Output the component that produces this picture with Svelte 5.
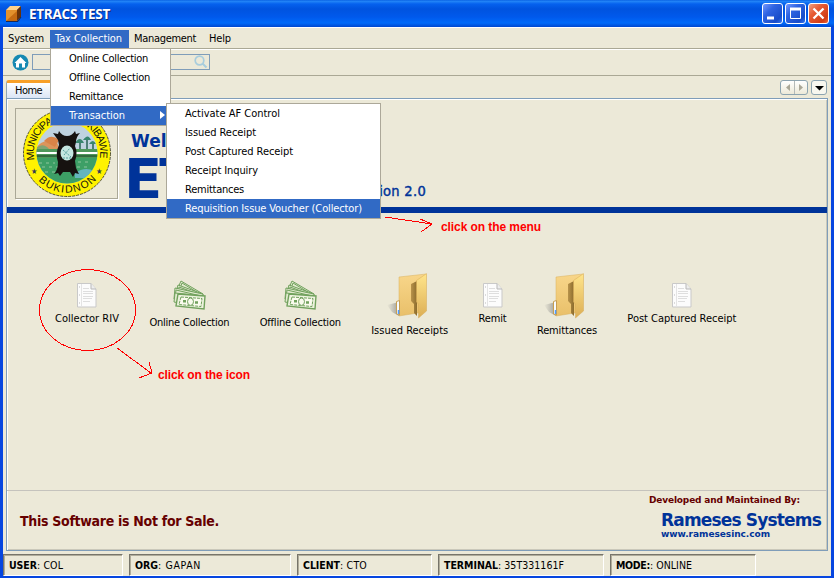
<script>
  const menus = [['System', 36, 5, 6], ['Tax Collection', 67, 5, 7], ['Management', 62, 5, 7], ['Help', 22, 6, 6]];
  const dropdown = [['Online Collection', 79], ['Offline Collection', 81], ['Remittance', 54], ['Transaction', 56]];
  const submenu = [['Activate AF Control', 95], ['Issued Receipt', 71], ['Post Captured Receipt', 108], ['Receipt Inquiry', 73], ['Remittances', 59], ['Requisition Issue Voucher (Collector)', 177]];
  const actions = [
    ['Collector RIV', 64, 'paper'], ['Online Collection', 80, 'money'], ['Offline Collection', 81, 'money'],
    ['Issued Receipts', 77, 'folder'], ['Remit', 28, 'paper'], ['Remittances', 60, 'folder'], ['Post Captured Receipt', 109, 'paper']
  ];
  const status = [
    ['USER', 28, ': COL', 26, 120], ['ORG', 23, ': GAPAN', 43, 162], ['CLIENT', 37, ': CTO', 27, 135],
    ['TERMINAL', 54, ': 35T331161F', 66, 166], ['MODE:', 34, ': ONLINE', 42, 146]
  ];

  // Adjusts tracking so a label occupies the given width.
  function fit(node, width) {
    const natural = node.getBoundingClientRect().width;
    node.style.letterSpacing = (width - natural) / node.textContent.length + 'px';
  }
</script>

{#snippet label(text, width)}<span class="label" use:fit={width}>{text}</span>{/snippet}

{#snippet paper()}
  <svg class="paper" width="20" height="25" viewBox="0 0 20 25">
    <path d="M.5.5H14L19 6V24H.5Z" fill="#fcfcfc" stroke="#c9c9c9" />
    <path d="M14 .5V6H19" fill="#eee" stroke="#b8b8b8" />
    <path d="M4.5 1V23" stroke="#e4e4e4" />
    <path d="M6 5.5H12M6 8.5H16M6 10.5H16M6 13.5H16M6 15.5H15M6 18.5H13" stroke="#dedede" />
    <path d="M2 4H3M2 12H3M2 20H3" stroke="#bbb" />
  </svg>
{/snippet}

{#snippet money()}
  <svg class="money" width="33" height="31" viewBox="0 0 33 31">
    <g stroke="#71a15d" fill="#e2ebcf">
      <path d="M8 1 30 14 24 25 3 12Z" /><path d="M9 3 27 14 23 21 6 11Z" fill="none" />
      <path d="M5 5 30 14 25 27 2 16Z" /><path d="M6 7 28 15 24 23 5 15Z" fill="none" />
      <path d="M2 8 30 14 28 26 1 19Z" /><path d="M3 10 28 16 26 24 2 18Z" fill="none" />
      <path d="M2 13 31 16 30 27 1 22Z" />
      <path d="M5 14 32 16 31 29 3 26Z" fill="#edf2de" stroke-width="1.4" />
      <path d="M8 17 29 18.5 28 26.5 6 24.5Z" fill="#fafbee" stroke-dasharray="3 1" />
      <ellipse cx="17.5" cy="21.7" rx="3" ry="3.7" fill="#f8faec" />
      <path d="M10 21.2h3M22 22.5h3" stroke-width="2.5" />
    </g>
  </svg>
{/snippet}

{#snippet folder()}
  <svg class="folder" width="44" height="46" viewBox="0 0 44 46">
    <defs>
      <linearGradient id="back" x2="0" y2="1"><stop stop-color="#f8d68a" /><stop offset="1" stop-color="#e9c06a" /></linearGradient>
      <linearGradient id="front" x2="0" y2="1"><stop stop-color="#ffe58b" /><stop offset="1" stop-color="#dcae55" /></linearGradient>
      <linearGradient id="dark"><stop stop-color="#b8934b" /><stop offset="1" stop-color="#8c6c2d" /></linearGradient>
      <linearGradient id="shade"><stop stop-color="#888" stop-opacity="0" /><stop offset="1" stop-color="#777" /></linearGradient>
    </defs>
    <path d="M0 32 12 29V43L5 39Z" fill="url(#shade)" opacity=".7" />
    <path d="M12 4 39 1 37 39 12 43Z" fill="url(#back)" stroke="#d9b15e" stroke-width=".5" />
    <path d="M24 11 30 8V43L27 40V31L24 28Z" fill="url(#dark)" />
    <path d="M29.500 7.500 39.500 .6V38L31.500 45V31L29.500 29Z" fill="url(#front)" stroke="#d6ab57" stroke-width=".5" />
    <path d="M9.500 28.500 12.500 27.500V42L9.500 41Z" fill="#f7fbff" stroke="#c79e50" /><path d="M11.500 37V41" stroke="#4f9cff" stroke-width="1.500" />
  </svg>
{/snippet}

<div class="window">
  <header class="titlebar">
    <svg width="17" height="18" viewBox="0 0 17 18">
      <path d="M1 5 5 1H16L12 5Z" fill="#ffd28a" /><path d="M1 5H12V16H1Z" fill="#e2912c" /><path d="M1 16 12 6V16Z" fill="#c56b12" /><path d="M12 5 16 1V12L12 16Z" fill="#693207" />
      <path d="M1 16.500H13L16 12" fill="none" stroke="#192a58" />
    </svg>
    <b>{@render label('ETRACS TEST', 81)}</b>
    <div class="controls">
      <i class="control"><svg width="20" height="20"><path d="M5 15H12" stroke="#fff" stroke-width="3" /></svg></i>
      <i class="control"><svg width="20" height="20"><path d="M5.500 5V15.500H15.500V5" fill="none" stroke="#fff" /><path d="M5 6H16" stroke="#fff" stroke-width="3" /></svg></i>
      <i class="control close"><svg width="20" height="20"><path d="M5.500 5.500 15.500 15.500M15.500 5.500 5.500 15.500" stroke="#fff" stroke-width="2.300" /></svg></i>
    </div>
  </header>

  <div class="client">
    <nav class="menubar">
      {#each menus as [text, width, left, right], i}
        <span class:active={i === 1} style="padding-left:{left}px;padding-right:{right}px">{@render label(text, width)}</span>
      {/each}
    </nav>
    <div class="toolbar">
      <svg width="17" height="17" viewBox="0 0 17 17"><circle cx="8.500" cy="8.500" r="8" fill="#1689b2" /><path d="M2.500 9 8.500 3 14.500 9H13V13.500H10V9.500H7V13.500H4V9Z" fill="#fff" /></svg>
      <div class="search"><svg width="14" height="14" viewBox="0 0 14 14"><circle cx="5.500" cy="5.500" r="4.300" fill="none" stroke="#a8cddd" stroke-width="1.700" /><path d="M8.500 8.500 12.500 12.500" stroke="#a8cddd" stroke-width="2" /></svg></div>
    </div>
    <div class="tabs">
      <div class="tab">{@render label('Home', 27)}</div>
      <div class="pager"><svg width="26" height="13"><path d="M9 3V10L5 6.500ZM18 3V10L22 6.500Z" fill="#aaa797" /><path d="M13.500 0V13" stroke="#b4b9b8" /></svg></div>
      <div class="pager more"><svg width="14" height="13"><path d="M3 5H12L7.500 9.500Z" fill="#000" /></svg></div>
    </div>

    <main>
      <section class="banner">
        <div class="seal">
          <svg width="88" height="88" viewBox="-44 -44 88 88">
            <defs>
              <path id="upper-arc" d="M-32.500 7A33.200 33.200 0 1 1 32.500 7" />
              <path id="lower-arc" d="M-33 22A39.700 39.700 0 0 0 33 22" />
              <clipPath id="scene"><circle r="30.500" /></clipPath>
            </defs>
            <circle r="43.500" fill="#fff200" stroke="#282820" stroke-width=".8" stroke-dasharray="3 1" />
            <g clip-path="url(#scene)">
              <rect x="-31" y="-31" width="62" height="62" fill="#bfd2df" />
              <path d="M-31-4Q-27-12-19-12-9-15-8-4V0H-31Z" fill="#dc955b" />
              <path d="M-23-12Q-16-20-8-13L-12-6Z" fill="#d98448" />
              <path d="M-31-5Q-24-11-18-4H-10V-1H-31Z" fill="#80a474" />
              <path d="M13-3V-10M20-3V-13M26-3V-9" stroke="#4c7e76" stroke-width="2" />
              <path d="M8-10q5-8 9 0M16-13q5-7 8 0M22-9q4-6 7 0" fill="#38866e" />
              <path d="M-31-4H31V5H-31Z" fill="#4e985b" /><path d="M-31 0H31" stroke="#fff" stroke-width="2" /><path d="M-31 3H31" stroke="#163f27" />
              <path d="M-31 5H31V31H-31Z" fill="#3d9f66" />
              <path d="M-28 10H-12M-25 14H-9M-22 19H-7M11 9H25M10 14H23" stroke="#74b98a" stroke-width="1.500" stroke-dasharray="3 4" />
              <path d="M8 20Q18 13 27 18V25H8Z" fill="#65b5bd" />
            </g>
            <path d="M-14-20-9-19-8-22Q-5-17 0-17 5-17 8-22L9-19 13-20Q9-16 9-11L8-7Q11 0 8 8L9 15 12 21 8 20 6 24 3 19H-4L-7 23-9 20-13 21Q-9 17-9 9-12 0-8-8L-9-13Z" fill="#161210" />
            <ellipse cy="0" rx="6.500" ry="7.500" fill="#c4e6e0" /><path d="M-4-3 4 4M-3 2 3-5M-4 5 4 5" stroke="#58a29f" stroke-dasharray="2 1" />
            <g fill="#15140e" font-family="Liberation Sans, sans-serif" font-size="10.500">
              <text><textPath href="#upper-arc" textLength="116">MUNICIPALITY OF KIBAWE</textPath></text>
              <text><textPath href="#lower-arc" startOffset="7" textLength="65">BUKIDNON</textPath></text>
            </g>
            <text x="-36" y="21" font-size="8" fill="#333a55">★</text><text x="29" y="21" font-size="8" fill="#333a55">★</text>
          </svg>
        </div>
        <div class="product">
          <div class="welcome">Welcome to</div>
          <div class="name">ETRACS</div>
        </div>
        <div class="version">{@render label('Version 2.0', 76)}</div>
      </section>
      <section class="desktop">
        {#each actions as [text, width, icon]}
          <div class="shortcut {icon}-item" style="width:{width}px">
            {#if icon === 'paper'}{@render paper()}{:else if icon === 'money'}{@render money()}{:else}{@render folder()}{/if}
            {@render label(text, width)}
          </div>
        {/each}
      </section>
      <footer>
        <div class="notice">{@render label('This Software is Not for Sale.', 199)}</div>
        <div class="vendor">
          <div class="developed">{@render label('Developed and Maintained By:', 151)}</div>
          <div class="company">{@render label('Rameses Systems', 160)}</div>
          <div class="site">{@render label('www.ramesesinc.com', 109)}</div>
        </div>
      </footer>
    </main>
    <div class="statusbar">
      {#each status as [key, keyWidth, value, valueWidth, width]}
        <div class="cell" style="width:{width}px"><b>{@render label(key, keyWidth)}</b>{@render label(value, valueWidth)}</div>
      {/each}
    </div>
  </div>

  <div class="popup dropdown">
    {#each dropdown as [text, width], i}
      <div class="entry" class:selected={i === 3}>{@render label(text, width)}{#if i === 3}<svg width="6" height="9"><path d="M0 0V8L5 4Z" fill="#fff" /></svg>{/if}</div>
    {/each}
  </div>
  <div class="popup submenu">
    {#each submenu as [text, width], i}
      <div class="entry" class:selected={i === 5}>{@render label(text, width)}</div>
    {/each}
  </div>

  <svg class="marks" width="834" height="578" fill="none" stroke="#f00" shape-rendering="crispEdges">
    <ellipse cx="87.500" cy="310" rx="48" ry="40.500" />
    <path d="M117 348 151 373M149 362 152 373 139 378M385 217 432 224M420 219 432 224 421 232" />
  </svg>
  <div class="callout menu-callout">{@render label('click on the menu', 100)}</div>
  <div class="callout icon-callout">{@render label('click on the icon', 92)}</div>
</div>

<style>
  .window { position: relative; box-sizing: border-box; width: 834px; height: 578px; padding: 0 3px 2px; overflow: hidden; background: #0646e0; font: 11px "DejaVu Sans Condensed", "DejaVu Sans", sans-serif; font-stretch: condensed; color: #000; }
  .label { display: inline-block; white-space: pre; }
  svg { display: block; flex: none; }
  .titlebar { display: flex; align-items: center; height: 27px; margin: 0 -3px; padding: 0 5px; box-sizing: border-box; background: linear-gradient(#0055dd 0, #2588f8 1px, #0561ee 4px, #0053df 9px, #0059ec 17px, #006af9 23px, #0047cf 27px); }
  .titlebar b { margin-left: 7px; font: bold 13.500px "Open Sans", sans-serif; font-stretch: normal; color: #fff; text-shadow: 1px 1px #0c2b82; }
  .controls { display: flex; gap: 2px; margin-left: auto; }
  .control { box-sizing: border-box; width: 21px; height: 21px; border: 1px solid #fff; border-radius: 3px; background: linear-gradient(135deg, #7598ff, #2f64e2 35%, #174cc9 80%, #3779f3); }
  .control svg { margin: -1px; }
  .close { background: linear-gradient(135deg, #f0a080, #e75c35 35%, #d13c15 80%, #f16837); }
  .client { height: 549px; background: #ece9d8; display: flex; flex-direction: column; }
  .menubar { box-sizing: border-box; height: 22px; padding-top: 2px; border-top: 1px solid #fff; border-bottom: 1px solid #aaa895; display: flex; }
  .menubar > span { display: block; line-height: 18px; height: 19px; }
  .active { background: #316ac5; color: #fff; }
  .toolbar { box-sizing: border-box; height: 27px; border-top: 1px solid #fff; border-bottom: 1px solid #aaa895; display: flex; align-items: center; padding: 0 9px 1px; gap: 3px; }
  .search { box-sizing: border-box; width: 178px; height: 16px; border: 1px solid #7f9db9; display: flex; justify-content: flex-end; align-items: center; padding-right: 1px; }
  .tabs { display: flex; height: 22px; align-items: flex-start; padding: 4px 4px 0 3px; box-sizing: border-box; gap: 3px; }
  .tab { box-sizing: border-box; height: 18px; width: 54px; padding-left: 8px; line-height: 15px; border: 1px solid #91a7b4; border-width: 0 1px; border-top: 3px solid #f8a028; border-radius: 3px 3px 0 0; background: linear-gradient(#fff, #dbe5f5); }
  .pager { box-sizing: border-box; width: 28px; height: 15px; border: 1px solid #8da4b0; border-radius: 3px; background: linear-gradient(#fff, #ece9d8); margin-left: auto; }
  .more { width: 16px; margin-left: 0; background: #f8f7ef; }
  main { box-sizing: border-box; height: 453px; margin: 0 3px; border: 1px solid #7f9db9; display: flex; flex-direction: column; box-shadow: inset 1px 1px #fff, inset -1px -1px #cac8ba; }
  .banner { box-sizing: border-box; height: 114px; border-bottom: 6px solid #039; padding: 9px 8px 0; display: flex; color: #039; }
  .seal { box-sizing: border-box; width: 103px; height: 91px; border: 1px solid #aaa897; padding: 0 7px; box-shadow: 1px 1px #fff; }
  .product { width: 243px; padding: 21px 0 0 13px; box-sizing: border-box; font-family: "DejaVu Sans", sans-serif; font-stretch: normal; font-weight: bold; }
  .welcome { font-size: 17px; line-height: 25px; }
  .name { margin-left: -7px; font-size: 56px; line-height: 50px; letter-spacing: -3px; }
  .version { width: 65px; display: flex; justify-content: flex-end; padding-top: 75px; font: 14.500px "DejaVu Sans Condensed", sans-serif; font-stretch: condensed; -webkit-text-stroke: .4px #039; white-space: nowrap; }
  .desktop { height: 277px; box-sizing: border-box; padding: 59px 0 0 48px; display: flex; gap: 30.400px; }
  .shortcut { flex: none; display: flex; flex-direction: column; align-items: center; line-height: 14px; }
  .paper-item { padding-top: 11px; gap: 4px; }
  .money-item { padding-top: 8px; gap: 5px; }
  .folder-item { padding-top: 1px; gap: 5px; }
  .folder { margin-left: -1px; }
  footer { height: 60px; box-sizing: border-box; border-top: 1px solid #c5c3bd; display: flex; justify-content: space-between; padding: 0 6px 0 13px; font-weight: bold; }
  .notice { padding-top: 21px; font-size: 14px; line-height: 18px; color: #600; }
  .vendor { width: 172px; color: #039; font-family: "DejaVu Sans", sans-serif; font-stretch: normal; }
  .developed { font-size: 9px; line-height: 12px; padding-top: 3px; color: #600; }
  .company { font-size: 17px; line-height: 20px; padding: 4px 0 0 12px; }
  .site { font-size: 9px; line-height: 10px; padding-left: 12px; margin-top: -1px; }
  .statusbar { display: flex; gap: 6px; margin-top: 3px; height: 22px; }
  .cell { box-sizing: border-box; height: 22px; border: 1px solid; border-color: #77756b #fff #fff #77756b; box-shadow: inset 1px 1px #b1ad9b; display: flex; padding-left: 5px; line-height: 20px; font-size: 10.500px; }
  .popup { position: absolute; box-sizing: border-box; background: #fff; border: 1px solid #aca899; }
  .dropdown { left: 50px; top: 48px; width: 121px; height: 78px; }
  .submenu { left: 166px; top: 103px; width: 215px; height: 116px; }
  .entry { height: 19px; line-height: 18px; padding: 0 4px 0 18px; display: flex; align-items: center; justify-content: space-between; }
  .selected { background: #316ac5; color: #fff; }
  .marks { position: absolute; inset: 0; }
  .callout { position: absolute; color: #f00; font: bold 12px/14px "Liberation Sans", sans-serif; font-stretch: normal; }
  .menu-callout { left: 441px; top: 220px; }
  .icon-callout { left: 158px; top: 368px; }
</style>
